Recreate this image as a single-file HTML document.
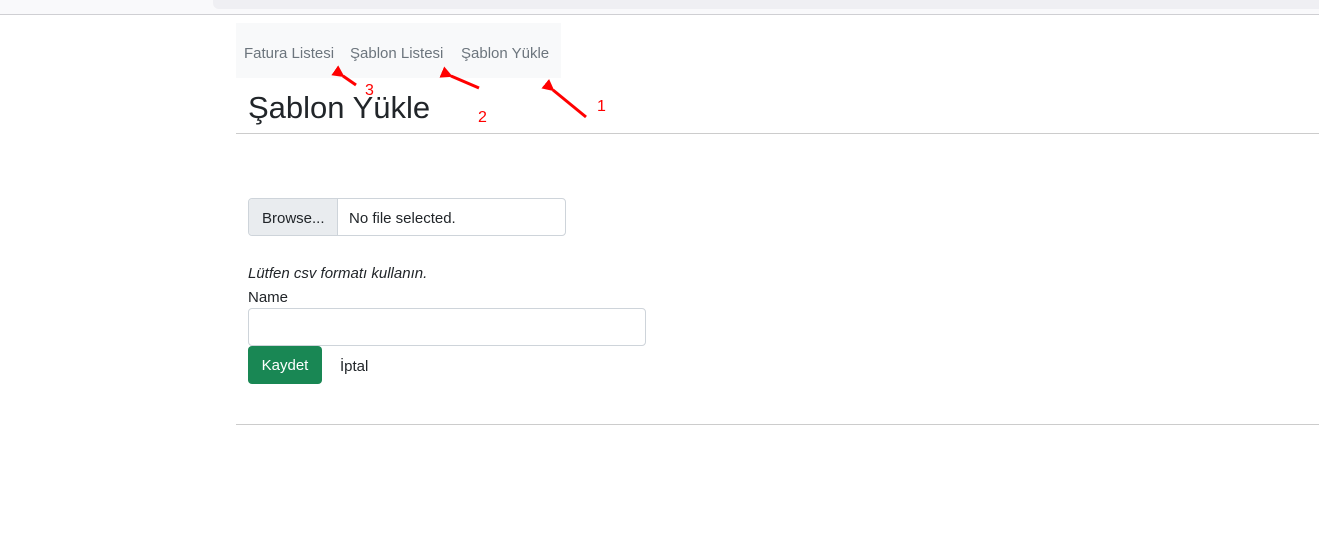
<!DOCTYPE html>
<html><head><meta charset="utf-8"><style>
body{margin:0;width:1319px;height:536px;background:#fff;font-family:"Segoe UI","Liberation Sans",sans-serif;position:relative;overflow:hidden;color:#212529}
.a{position:absolute}
</style></head><body>
<div class="a" style="left:0;top:0;width:1319px;height:14px;background:#f9f9fb;border-bottom:1px solid #cfcfd3"></div>
<div class="a" style="left:213px;top:0;width:1106px;height:9px;background:#efeff3;border-radius:0 0 0 6px"></div>
<div class="a" style="left:236px;top:23px;width:325px;height:55px;background:#f8f9fa"></div>
<div class="a" style="left:244px;top:45px;font-size:15px;color:#6c757d;white-space:nowrap">Fatura Listesi</div>
<div class="a" style="left:350px;top:45px;font-size:15px;color:#6c757d;white-space:nowrap">Şablon Listesi</div>
<div class="a" style="left:461px;top:45px;font-size:15px;color:#6c757d;white-space:nowrap">Şablon Yükle</div>
<div class="a" style="left:248px;top:90px;font-size:31px;white-space:nowrap">Şablon Yükle</div>
<div class="a" style="left:236px;top:133px;width:1083px;height:1px;background:#ccc"></div>
<div class="a" style="left:248px;top:198px;width:316px;height:36px;border:1px solid #ced4da;border-radius:4px;overflow:hidden">
<div style="position:absolute;left:0;top:0;width:88px;height:36px;background:#e9ecef;border-right:1px solid #ced4da"></div>
<div style="position:absolute;left:13px;top:11px;font-size:15px">Browse...</div>
<div style="position:absolute;left:100px;top:11px;font-size:15px">No file selected.</div></div>
<div class="a" style="left:248px;top:265px;font-size:15px;font-style:italic">Lütfen csv formatı kullanın.</div>
<div class="a" style="left:248px;top:289px;font-size:15px">Name</div>
<div class="a" style="left:248px;top:308px;width:396px;height:36px;border:1px solid #ced4da;border-radius:4px"></div>
<div class="a" style="left:248px;top:346px;width:74px;height:38px;background:#198754;border-radius:4px;color:#fff;font-size:15px;line-height:40px;text-align:center">Kaydet</div>
<div class="a" style="left:340px;top:358px;font-size:15px">İptal</div>
<div class="a" style="left:236px;top:424px;width:1083px;height:1px;background:#ccc"></div>
<svg class="a" style="left:0;top:0" width="1319" height="536">
<defs><marker id="m" markerUnits="userSpaceOnUse" markerWidth="12" markerHeight="12" refX="2" refY="6" orient="auto"><path d="M12,0 L0,6 L12,12 z" fill="#f00"/></marker></defs>
<g stroke="#f00" stroke-width="3" fill="none">
<line x1="586" y1="117" x2="553" y2="90" marker-end="url(#m)"/>
<line x1="479" y1="88" x2="451" y2="76" marker-end="url(#m)"/>
<line x1="356" y1="85" x2="343" y2="76" marker-end="url(#m)"/>
</g>
<g fill="#f00" font-family="Liberation Sans" font-size="16">
<text x="365" y="95">3</text><text x="478" y="122">2</text><text x="597" y="111">1</text></g>
</svg>
</body></html>
